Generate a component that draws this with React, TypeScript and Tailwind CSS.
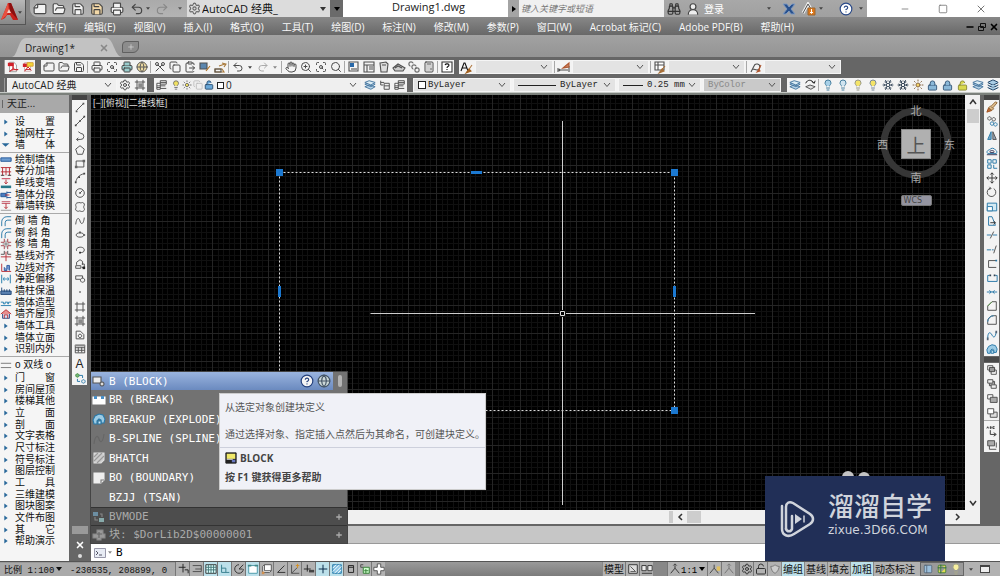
import React from 'react';
import {
  File, FolderOpen, Save, Printer, Undo2, Redo2, Settings, Hand, ScanSearch, ZoomIn, Search, Copy,
  ClipboardPaste, X, Binoculars, UserRound, CircleHelp, Lightbulb, Sun, Snowflake, Layers,
  Lock, LockOpen, Calculator, Scissors, Table2, PanelLeft, SquareStack, Minus, Square, Globe, Plus,
} from 'lucide-react';

type Shape = [d: string, stroke: string, fill?: string];
const K = '#505050';
const B = '#2878a8';
const R = '#b83038';

const glyphs: Record<string, Shape[]> = {
  line: [['M3 11L11 3', K], ['M2 11h2v2h-2zM10 2h2v2h-2z', 'none', '#555']],
  xline: [['M2 12L12 2', K], ['M1 11h2v2h-2zM6 6h2v2h-2zM11 1h2v2h-2z', 'none', '#444']],
  pline: [['M3 11h5a3.5 3.5 0 0 0 0-7M5 9L3 11l2 2M8 4L5 2', K]],
  polygon: [['M7 2L12 6 10 12H4L2 6z', K]],
  rect: [['M2.500 3.500h9v7h-9z', K], ['M1 9h3v3h-3zM10 2h3v3h-3z', 'none', '#666']],
  arc: [['M2 12C3 7 6 3 12 2', K], ['M1 11h2v2h-2zM5 5h2v2h-2zM11 1h2v2h-2z', 'none', '#444']],
  circle: [['M7 2a5 5 0 1 0 .01 0M7 7L10 4', K], ['M6 6h2v2h-2z', 'none', K]],
  cloud: [['M5 2c1-1 3 1 4 0s4 1 3 3-1 2 0 4-2 4-4 3-2 0-3 0-4-1-3-3 0-3 0-4 0-3 3-3z', K]],
  spline: [['M2 11C3 2 6 3 7 7S11 12 12 3', K]],
  ellipse: [['M7 4.500c-6 0-6 5 0 5s6-5 0-5', K], ['M6 3h2v2h-2zM11 6h2v2h-2z', 'none', K]],
  earc: [['M3 8C1 3 12 2 12 7 12 10 9 10 7 10', K], ['M6 9h2v2h-2z', 'none', '#222']],
  insert: [['M3 8V5l4-3 3 2v4M2 9h6v3H2zM9 7h3v4H9', K], ['M10 10h3v3h-3z', 'none', '#222']],
  block: [['M2 8.500V4.500h8v3M2 8.500h5', K], ['M10 7a2.500 2.500 0 1 0 .01 0', K]],
  point: [['M6 6h2v2h-2z', 'none', '#666']],
  region: [['M3.500 1v12M10.500 1v12M1 3.500h12M1 10.500h12', K]],
  gradient: [['M3.500 1v12M10.500 1v12M1 3.500h12M1 10.500h12', K], ['M5 5h5v5H5z', 'none', '#888']],
  wipe: [['M2.500 11.500v-9h5l4 4v5zM7 6a2 2 0 1 0 .01 0', K]],
  table: [['M1.500 2.500h11v9h-11zM1.500 5.500h11M1.500 8.500h11M5 5v6M9 5v6', K], ['M1 2h12v2H1z', 'none', '#888']],
  addsel: [['M4 2a2 2 0 1 0 .01 0', '#3a8a3a', '#7cb87c'], ['M11 9a2 2 0 1 0 .01 0M6 4h4v3M4 8v3h3', B]],
  brush: [['M1 13l2-5 4 3z', '#a05020', '#c07038'], ['M3 8l2-2 4 3-2 2zM6 6l5-5 2 1-5 6', '#906838', '#e0c090']],
  copy2: [['M4 2a2 2 0 1 0 .01 0M9 3a2 2 0 1 0 .01 0', K], ['M7 8a2 2 0 1 0 .01 0M11 9a2 2 0 1 0 .01 0', B]],
  mirror: [['M6 2v9H2z', B, '#7aa8c4'], ['M8 2v9h4z', K, '#9ab']],
  offset: [['M2 11C0 9 2 7 4 7a4 4 0 0 1 7 0c2 1 2 3 1 4z', B], ['M5 10c-1-2 1-3 2-2 1-1 3 0 2 2zM1 12.500h12', '#335']],
  array: [['M2 2h4v4H2zM2 8h4v4H2zM8 2h4v4H8z', B], ['M9 8v4h4', B]],
  move: [['M7 1v12M1 7h12M5 3l2-2 2 2M5 11l2 2 2-2M3 5L1 7l2 2M11 5l2 2-2 2', '#333']],
  rotate: [['M5 2.500A5 5 0 1 0 9 3M4 1l2 2-3 1', K]],
  scale: [['M1.500 2.500h11v9h-11z', B, '#d4eaf4'], ['M1.500 6.500h6v5h-6z', B, '#fff']],
  stretch: [['M3 12V2h4l4 10z', B], ['M5 9h6M9 7l2 2-2 2', '#333']],
  trim: [['M1 7h5M8 7h5', B], ['M5 11L9 3', K]],
  extend: [['M1 8h5M7 8h2', B], ['M9 12l3-9', K]],
  brkpt: [['M12 3H3v8h9', K], ['M11 2h2v2h-2z', 'none', B]],
  brk: [['M4 4H2v7h11V4h-2', B], ['M4 3h2v2H4zM9 3h2v2H9z', 'none', '#345']],
  join: [['M1 7h12M4 5l2 2-2 2M10 5L8 7l2 2', B]],
  chamfer: [['M2 12V7l5-5h5v10z', K], ['M2 7l5-5', '#5a9a4a']],
  fillet: [['M2 12V9a7 7 0 0 1 7-7h3v10z', K], ['M2 9a7 7 0 0 1 7-7', B]],
  blend: [['M2 11C2 3 5 3 7 7S11 10 12 3', B], ['M1 10h2v3H1zM11 2h2v3h-2z', 'none', '#567']],
  explode: [['M1 8l2-4 4-2 4 1 2 4-1 4H9V8L7 7 5 9v3H2z', B, '#9ccbe4'], ['M6 9h3v3H6z', B, '#cfe8f4']],
  order1: [['M2 2h6v5H2zM6 7h6v5H6z', K, '#fff'], ['M4 4h6v5H4z', '#444', '#999']],
  order2: [['M4 4h6v5H4z', K, '#aaa'], ['M2 2h6v4H2zM6 8h6v4H6z', K, '#eee']],
  order3: [['M2 2h6v5H2z', K, '#fff'], ['M5 5h8v6H5z', K, '#aaa']],
  order4: [['M5 6h8v6H5z', K, '#ddd'], ['M2 2h7v6H2z', K, '#fff']],
  abc: [['M5 6v5h6M9 9l3 2-3 2M1 4l1-2 1 2M5 2v2h1V2zM10 2H8v2h2', '#333']],
  tofront: [['M2 2h8v6H2z', K, '#aaa'], ['M4 8v4h8M12 4v6', K]],
  pdf: [['M3 1.500h5l3 3v8H3z', '#999', '#fff'], ['M1 2h7v4H1z', 'none', '#d02028'], ['M3 12c4-2 4-4 4-6 0 3 2 5 6 4-4 0-7 0-10 2', '#c82028', '#e05058']],
  pdf2: [['M3 2h7v10H3z', '#caa', '#fff'], ['M1 3h6v4H1z', 'none', '#d02028'], ['M6 2h7v4H8L6 8z', '#d8a030', '#f4d838'], ['M3 12l4-5 4 4M4 10h6', '#c82028']],
  stack: [['M1 9l5-2 7 2-5 3zM1 6l5-2 7 2-5 3z', '#4878a0', '#b8d4e8'], ['M1 4l5-2 7 2-5 3z', '#4878a0', '#dcecf4']],
  stackk: [['M2 9l5-2 6 2-5 3z', K, '#ddd'], ['M2 5C4 0 9 1 11 4M9 3l3 2 1-3', '#111']],
  lstack: [['M5 2h7v4H5zM3 8h8M3 11h9M5 4h7', K], ['M1 5h4v7H1zM1 8h4M1 10h4', K, '#fff']],
  tree: [['M2 2v5h3M2 4h4M6 5h6v7H6zM6 8h6', K, '#eee']],
  bookA: [['M1 11L4 3h1l3 8M2 8h5', '#111'], ['M7 12L12 5', '#b07840'], ['M6 13l3-4 2 2z', '#a06020', '#a06020']],
  dim: [['M1 12V8M12 12V6M2 10h9M3 9l-1 1 1 1', K], ['M6 8l6-5 0 4z', '#b05830', '#c88060']],
  tbl: [['M2 2h9v8H2zM2 5h9M5 2v8', K, '#fff'], ['M7 12l5-6M6 13l3-4 2 2z', '#a87038', '#a87038']],
  lead: [['M2 12L5 6a3 3 0 1 1 3 4L4 9', K], ['M9 11l3-6M8 12l2-3 1 2z', '#b05830', '#b05830']],
  linkp: [['M2 2h9v9H2z', K, '#f4f4f4'], ['M3 3h4v4H3z', 'none', '#2868a8'], ['M4 9h6', K]],
  palette: [['M2 2h10v10H2zM2 5h10M5 5v7M7 7h4M7 9h4', K]],
  sheet: [['M3 3l6-1 2 2-1 8H4zM5 5h4', K, '#ddd']],
  markup: [['M1 8l5-4 7 4-2 3H3zM3 8l3-2 4 2', K, '#ccc']],
  q: [['M2 2h10v10H2z', '#333', '#fff'], ['M5 5c1-2 4-1 4 0 0 2-2 1-2 3M7 9v1', '#111']],
  match: [['M2 3h7v6H2z', K, '#5b86ae'], ['M8 11l4-5', '#b07020']],
  quick: [['M2 9h7l2 3H2zM6 6l6-2M9 3l4 1-2 3', '#a87838'], ['M2 9h6v3H2z', K]],
  wall: [['M1 4.500h12v4H1z', '#22589a', '#6c9cd0']],
  multi: [['M1 3h12M1 8h12M3 3v9M7 3v9M11 3v9', R], ['M1 12h4M9 12h4', '#333']],
  single: [['M2 2h10', '#c03048'], ['M7 3v5M5 6l2 2 2-2', R], ['M1 10h12v3H1z', 'none', '#287888']],
  seg: [['M1 5h6v4H1zM8 4h5M8 10h5M8 3v8', '#22589a', '#4a7cc0'], ['M6 7h5', R]],
  curtain: [['M2 2h10M2 4h10', '#c05060'], ['M7 4v6M5 8l2 2 2-2', R], ['M1 12h12', '#999']],
  corner: [['M2 13V8a6 6 0 0 1 6-6h5', B], ['M6 13V9a3 3 0 0 1 3-3h4', B]],
  cross: [['M5 1v4H1M9 1v4h4M5 13V9H1M9 13V9h4', '#a04048'], ['M7 3v8M3 7h8', '#777']],
  crossr: [['M5 1v4H1M9 1v4h4', K], ['M7 2v11M1 8h12', R]],
  edge: [['M2 2v9M2 11h11', R], ['M5 6v4h3V4h3v6', '#3058a0', '#789ad0']],
  gap: [['M2 2v10M12 2v10', '#2078a8'], ['M4 7h6M5 5L4 7l1 2M9 5l1 2-1 2', '#3088b8']],
  warm: [['M1 7h12v4H1z', '#224878', '#5a80b0'], ['M2 3v4M5 5v3M8 5v3M11 5v3', '#224878']],
  shape: [['M1 10h12M1 6h3v2h2V6h3v2h1V6h3', '#2880b0']],
  roof: [['M1 7l6-5 6 5', R, '#e89090'], ['M3 7v5h8V7', '#305088', '#dde'], ['M5 12V8h4v4', R]],
  double: [['M1 5h12M1 10h12', '#777']],
  expand: [['M5 4l4 3-4 3z', 'none', '#28689a']],
  open: [['M2 5h9L6.500 9z', 'none', '#28689a']],
  snap: [['M7 1v10M2 5h8M9 8h4v4', '#222']],
  ortho: [['M2 3h10v7H2M5 7h7', K]],
  grid: [['M1 2h12v10H1z', '#333', '#dff'], ['M4 2v10M7 2v10M10 2v10M1 5h12M1 8h12', '#477']],
  lsnap: [['M3 2v9h9', '#38808e'], ['M3 6h5v5', '#38808e']],
  polar: [['M7 2a5 5 0 1 0 5 5M7 7l5-5M7 7h4', '#333']],
  osnap: [['M2 3h10v9H2z', '#4898a8', '#fff'], ['M1 2h4v2H1zM9 2h4v2H9z', 'none', '#488']],
  osnap3: [['M4 2h8v7l-2 2H2V4zM4 9V2M4 9h8', '#555', '#fff'], ['M1 10h3v3H1z', 'none', '#d09050']],
  angle: [['M11 3L3 11h9', '#333']],
  ducs: [['M3 2v10h9M3 12l7-7', K], ['M10 1v5M8 3h4', '#d89020']],
  dyn: [['M5 2v8M1 7h8', '#222'], ['M7 8h6v3H7z', 'none', '#444']],
  plusb: [['M7 2v10M2 7h10', '#024']],
  transp: [['M2 2h10v10H2z', '#2478a8', '#88c4e4'], ['M2 6l4-4M2 10l8-8M4 12l8-8M8 12l4-4', '#fff']],
  small: [['M4 3h6v8H4zM4 5h6', '#222']],
  cycle: [['M2 5V2h3M2 5h3', K], ['M5 5h7v7H5z', '#388038', '#cfc'], ['M8 7v5M6 9h5', '#388038']],
  big: [['M5 1h4v4h4v4H9v4H5V9H1V5h4z', '#555', '#fff']],
  model: [['M2 2h10v10H2z', '#333', '#ddd'], ['M4 4l6 6M4 10h6', '#555']],
  lay: [['M1 3h5v6H1zM8 3h5v6H8z', '#333', '#eee'], ['M1 12h12', '#333']],
  anno: [['M7 2v4M7 6L2 12M7 6l5 6M5 3l2-2 2 2', '#333', '#ddd']],
  annoY: [['M6 2v4M6 6L1 12M6 6l5 6', '#444', '#ddd'], ['M9 4h4v5H9z', 'none', '#e0c060']],
  shield: [['M2 4c3 0 4-1 5-2 1 1 3 2 5 2-1 5-3 7-5 8C4 11 3 8 2 4', '#777', '#ccc']],
  blk: [['M1 3h8v6H1z', '#555', '#eee'], ['M10 8a2 2 0 1 0 .01 0', '#555', '#ddd']],
  brkw: [['M1 4h12v7H1z', '#fff', '#fff'], ['M2 3h3v3H2zM9 3h3v3H9z', 'none', '#4a90c8']],
  hatchw: [['M2 2h10v7l-3 3H2z', '#ddd', '#ccc'], ['M2 6l4-4M2 10l8-8M5 12l7-7', '#999']],
  bow: [['M2 2h10v7l-3 3H2z', '#eee', '#eee'], ['M9 12V9h3', '#777']],
  splw: [['M2 12C3 3 6 3 7 7S11 11 12 2', '#666']],
  sysvar: [['M1 2h5v4H1z', 'none', '#6c8ea2'], ['M7 8h5v4H7z', 'none', '#8aa'], ['M3 7v3h3M8 4h2v3', '#888']],
  gearg: [['M5 2h6v4h2v4H9v2H5v-2H1V6h4z', '#888', '#999'], ['M5 6h5M7 4v6', '#666']],
  blockcol: [['M1 1h12v12H1z', '#222', '#222'], ['M2 2h10v6H2z', 'none', '#f0e868'], ['M8 9h4v3H8z', 'none', '#6878c0'], ['M2 8h7v1H2z', 'none', '#eee']],
};

function Glyph({ n, className = 'size-3.5' }: { n: string; className?: string }) {
  return (
    <svg viewBox="0 0 14 14" className={`${className} shrink-0`} aria-hidden="true">
      {glyphs[n].map(([d, s, f], i) => (
        <path key={i} d={d} stroke={s} fill={f ?? 'none'} strokeWidth={1.1} />
      ))}
    </svg>
  );
}

function Tool({ children, label, className = 'w-[15px]' }: { children: React.ReactNode; label: string; className?: string }) {
  return (
    <button type="button" aria-label={label} className={`flex h-full shrink-0 items-center justify-center ${className}`}>
      {children}
    </button>
  );
}

const Sep = () => <span className="mx-px h-3 w-px shrink-0 bg-[#a8a8a8]" />;
const Down = ({ className = 'text-[#333]' }: { className?: string }) => (
  <svg viewBox="0 0 6 4" className={`h-1 w-1.5 shrink-0 ${className}`}><path d="M0 0h6L3 4z" fill="currentColor" /></svg>
);
const SmallDown = ({ className = 'text-[#444]' }: { className?: string }) => (
  <svg viewBox="0 0 6 4" className={`h-[3px] w-1 shrink-0 ${className}`}><path d="M0 0h6L3 4z" fill="currentColor" /></svg>
);
const Chevron = () => (
  <svg viewBox="0 0 9 6" className="pointer-events-none mr-1 h-1.5 w-[9px] shrink-0"><path d="M2 1l3 3.500L8 1" fill="none" stroke="#555" /></svg>
);

function Combo({ label, value = '', width, lead, text = '', tone = 'bg-[#e3e3e3]' }: {
  label: string; value?: string; width: string; lead?: React.ReactNode; text?: string; tone?: string;
}) {
  return (
    <label className={`flex h-full shrink-0 items-center overflow-hidden border border-[#f5f5f5] ${tone} ${width}`}>
      {lead}
      <select aria-label={label} defaultValue={value} className={`h-full min-w-0 flex-1 appearance-none bg-transparent outline-none ${text}`}>
        <option>{value}</option>
      </select>
      <Chevron />
    </label>
  );
}

const strip = 'flex h-[14px] shrink-0 items-center bg-[#f3f3f3]';
const mono = "font-['Liberation_Mono','Noto_Sans_CJK_SC',monospace]";
const compact = "font-['Liberation_Sans','Noto_Sans_CJK_SC',sans-serif]";
const ic = 'size-3 shrink-0 text-[#4a4a4a]';

function Header() {
  const menus = ['文件(F)', '编辑(E)', '视图(V)', '插入(I)', '格式(O)', '工具(T)', '绘图(D)', '标注(N)', '修改(M)', '参数(P)', '窗口(W)', 'Acrobat 标记(C)', 'Adobe PDF(B)', '帮助(H)'];
  const qa = 'size-[14px] text-[#4a4a4a] fill-[#f2f2f2]';
  return (
    <header className="flex h-[35px] shrink-0 bg-gradient-to-b from-[#878787] from-50% to-[#686868]">
      <button type="button" aria-label="应用程序菜单" className="flex h-[25px] w-[26px] shrink-0 items-center border-r border-b border-[#555] bg-gradient-to-b from-[#b8b8b8] to-[#888]">
        <svg viewBox="0 0 18 20" className="h-5 w-[18px]">
          <path d="M1 18L8 1h3l7 17h-5l-3-5H7l-2 3z" fill="#c8201c" />
          <path d="M8 1l1 8-3 5-5 4z" fill="#e85040" />
          <path d="M9 1h2l7 17-8-9z" fill="#8c1010" />
          <path d="M9 7l2 4H7z" fill="#f4d0c8" />
        </svg>
        <SmallDown />
      </button>
      <div className="flex min-w-0 flex-1 flex-col">
        <div className="flex h-[17px] shrink-0">
          <div className="ml-1 flex w-[157px] shrink-0 items-center rounded-bl-lg bg-gradient-to-b from-[#aaa] to-[#b4b4b4]">
            <Tool label="新建" className="w-[19px]"><File className={`${qa} -rotate-90`} /></Tool>
            <Tool label="打开" className="w-[19px]"><FolderOpen className={qa} /></Tool>
            <Tool label="保存" className="w-[19px]"><Save className={qa} /></Tool>
            <Tool label="另存为" className="w-5"><Save className="size-[14px] fill-[#f4d9a8] text-[#444]" /></Tool>
            <Tool label="打印" className="w-5"><Printer className={qa} /></Tool>
            <Tool label="放弃" className="w-[19px]"><Undo2 className="size-[14px] text-[#444]" /></Tool>
            <SmallDown className="mr-0.5 text-[#444]" />
            <Tool label="重做" className="w-5"><Redo2 className="size-[14px] text-[#888]" /></Tool>
            <SmallDown className="ml-1.5 text-[#555]" />
          </div>
          <label className="flex w-[143px] shrink-0 items-center bg-[#dcdcdc] pr-1">
            <Settings className="mx-px size-[13px] shrink-0 text-[#666]" />
            <select aria-label="工作空间" className="h-full min-w-0 flex-1 appearance-none bg-transparent text-[11px] leading-4 text-[#111] outline-none"><option>AutoCAD 经典_</option></select>
            <Down />
          </label>
          <button type="button" aria-label="自定义快速访问工具栏" className="flex w-[13px] shrink-0 items-center justify-center bg-[#6a6a6a]"><Down className="text-black" /></button>
          <h1 className="flex min-w-0 flex-1 items-center justify-center bg-white pr-1 pb-1 pl-2.5 text-[11px] leading-none text-[#222]">Drawing1.dwg</h1>
          <button type="button" aria-label="展开搜索" className="flex w-[11px] shrink-0 items-center justify-center bg-[#a4a4a4]"><Down className="-rotate-90 text-black" /></button>
          <input aria-label="搜索" placeholder="键入关键字或短语" className="w-[145px] shrink-0 bg-[#f0f0f0] px-0.5 text-[9px] italic outline-none placeholder:text-[#777]" />
          <div className="flex w-[203px] shrink-0 items-center bg-gradient-to-b from-[#a8a8a8] to-[#a0a0a0]">
            <Tool label="查找" className="w-[19px]"><Binoculars className="size-[14px] text-[#333]" /></Tool>
            <Tool label="用户" className="w-[19px]"><UserRound className="size-[14px] fill-[#eee] text-[#444]" /></Tool>
            <button type="button" className="ml-0.5 text-[10px] leading-none text-white">登录</button>
            <span className="flex-1" />
            <SmallDown />
            <Tool label="交换" className="ml-1.5 w-6">
              <svg viewBox="0 0 14 12" className="h-3 w-3.5"><path d="M1 1h4l2 3 3-3h3L9 6l4 5H9L7 8l-3 3H1l4-5z" fill="#28508c" stroke="#7c98c0" /></svg>
            </Tool>
            <Tool label="更新" className="w-4">
              <svg viewBox="0 0 16 14" className="h-3.5 w-4"><path d="M2 11L7 2l3 5" fill="none" stroke="#eee" strokeWidth="3" /><path d="M2 11L7 2l3 5" fill="none" stroke="#555" /><path d="M7 6h7v7H7z" fill="#e07818" stroke="#963" /><path d="M10.500 7v4M9 10l1.500 1.500L12 10" stroke="#fff" fill="none" /></svg>
            </Tool>
            <SmallDown className="ml-0.5 text-[#444]" />
            <Tool label="帮助" className="ml-3.5 w-[18px]"><CircleHelp className="size-[14px] fill-white text-[#284888]" /></Tool>
            <SmallDown className="mx-1 text-[#444]" />
          </div>
          <div className="flex w-[133px] shrink-0 items-start bg-white pl-[19px] text-[#777]">
            <Tool label="最小化" className="h-2.5 w-[38px]"><Minus className="size-2.5" /></Tool>
            <Tool label="最大化" className="h-2.5 w-[38px]"><Square className="size-2.5" /></Tool>
            <Tool label="关闭" className="h-2.5 w-[38px]"><X className="size-3" /></Tool>
          </div>
        </div>
        <nav className="flex flex-1 items-center gap-[18px] pt-0.5 pl-[9px] text-[10px] leading-none whitespace-nowrap text-[#f8f8f8]">
          {menus.map((m) => <button type="button" key={m}>{m}</button>)}
          <span className="ml-auto flex items-center text-black">
            <Tool label="最小化图形" className="w-3"><Minus className="size-2.5" strokeWidth={4} /></Tool>
            <Tool label="还原图形" className="w-3">
              <svg viewBox="0 0 10 10" className="size-2.5"><path d="M3.500 1.500h5v4h-5zM1.500 4.500h5v4h-5z" fill="#777" stroke="#111" /></svg>
            </Tool>
            <Tool label="关闭图形" className="w-3"><X className="size-2.5" strokeWidth={4} /></Tool>
          </span>
        </nav>
      </div>
    </header>
  );
}

function FileTabs() {
  return (
    <div className="flex h-[22px] shrink-0 items-end bg-gradient-to-b from-[#a2a2a2] to-[#949494] pl-3">
      <div className="relative flex h-[19px] w-[110px] items-center pl-[13px] text-[10px] leading-none text-[#222]">
        <svg viewBox="0 0 110 19" preserveAspectRatio="none" className="absolute inset-0 h-full w-full"><path d="M0 19C6 18 6 0 14 0H94C102 0 102 18 110 19z" fill="#c2c2c2" /></svg>
        <span className="relative flex-1">Drawing1*</span>
        <button type="button" aria-label="关闭选项卡" className="relative mr-[13px]"><X strokeWidth={4} className="size-2.5 text-[#888]" /></button>
      </div>
      <button type="button" aria-label="新建选项卡" className="mb-1 flex h-3 w-[17px] items-center justify-center rounded-tl rounded-br-md border border-[#606060] bg-[#8c8c8c]"><Plus className="size-2 text-[#ddd]" /></button>
    </div>
  );
}

function Toolbars() {
  const byl = `text-[9px] text-[#222] ${mono}`;
  return (
    <div className="flex h-[35px] shrink-0 flex-col gap-1 overflow-hidden bg-[#666] pt-[3px]">
      <div className="flex">
        <span className="ml-1 h-[14px] w-px bg-[#999]" />
        <div className={strip}><Tool label="PDF"><Glyph n="pdf" className="size-3" /></Tool><Tool label="PDF 注释"><Glyph n="pdf2" className="size-3" /></Tool></div>
        <span className="w-1.5 shrink-0" />
        <div className={strip}>
          <Tool label="新建"><File className={`${ic} -rotate-90`} /></Tool>
          <Tool label="打开"><FolderOpen className={ic} /></Tool>
          <Tool label="保存"><Save className={ic} /></Tool>
          <Sep />
          <Tool label="打印"><Printer className={ic} /></Tool>
          <Tool label="打印预览"><ScanSearch className={ic} /></Tool>
          <Tool label="发布"><Printer className="size-3 fill-[#9cc] text-[#444]" /></Tool>
          <Tool label="三维打印"><Globe className="size-3 fill-[#ecd9a0] text-[#5a5a5a]" /></Tool>
          <Sep />
          <Tool label="剪切"><Scissors className={`${ic} rotate-90`} /></Tool>
          <Tool label="复制"><Copy className={ic} /></Tool>
          <Tool label="粘贴"><ClipboardPaste className={ic} /></Tool>
          <Tool label="特性匹配"><Glyph n="match" /></Tool>
          <Tool label="块编辑器"><Glyph n="quick" /></Tool>
          <Sep />
          <Tool label="放弃"><Undo2 className={ic} /></Tool>
          <span className="flex w-2.5 items-center justify-center"><SmallDown /></span>
          <Tool label="重做"><Redo2 className="size-3 text-[#aaa]" /></Tool>
          <span className="flex w-2.5 items-center justify-center"><SmallDown className="text-[#888]" /></span>
          <Sep />
          <Tool label="平移"><Hand className={ic} /></Tool>
          <Tool label="实时缩放"><ZoomIn className={ic} /></Tool>
          <Tool label="窗口缩放"><ScanSearch className={ic} /></Tool>
          <Tool label="缩放上一个"><Search className={ic} /></Tool>
          <Sep />
          <Tool label="特性"><Glyph n="linkp" /></Tool>
          <Tool label="设计中心"><Glyph n="palette" /></Tool>
          <Tool label="工具选项板"><Glyph n="sheet" /></Tool>
          <Tool label="图纸集"><Glyph n="markup" /></Tool>
          <Tool label="标记集"><SquareStack className={ic} /></Tool>
          <Tool label="计算器"><Calculator className={ic} /></Tool>
          <Sep />
          <Tool label="帮助"><Glyph n="q" /></Tool>
        </div>
        <span className="w-[5px] shrink-0" />
        <div className={strip}>
          <Tool label="文字样式" className="w-4"><Glyph n="bookA" /></Tool><Combo label="文字样式控制" width="w-[78px]" />
          <Sep /><Tool label="标注样式" className="w-4"><Glyph n="dim" /></Tool><Combo label="标注样式控制" width="w-[77px]" />
          <Sep /><Tool label="表格样式" className="w-4"><Glyph n="tbl" /></Tool><Combo label="表格样式控制" width="w-[77px]" />
          <Sep /><Tool label="引线样式" className="w-4"><Glyph n="lead" /></Tool><Combo label="引线样式控制" width="w-[77px]" />
        </div>
      </div>
      <div className="flex">
        <span className="ml-1 h-[14px] w-[3px] shrink-0 border-l border-[#999]" />
        <div className={strip}>
          <Combo label="工作空间" value="AutoCAD 经典" width="w-[110px]" text="pl-1 text-[10px] leading-none text-[#222]" tone="bg-[#efefef]" />
          <Tool label="工作空间设置"><Settings className={ic} /></Tool>
          <Tool label="我的工作空间"><Glyph n="gradient" className="size-3" /></Tool>
        </div>
        <span className="w-[7px] shrink-0" />
        <div className={strip}>
          <Tool label="图层特性"><Glyph n="lstack" className="size-3" /></Tool>
          <Combo label="图层" value="0" width="w-[193px]" text="text-[10px] leading-none text-[#222]" tone="bg-[#efefef]" lead={
            <span className="flex shrink-0 items-center gap-px pl-px">
              <Lightbulb className="size-2.5 fill-[#f0e060] text-[#666]" />
              <Sun className="size-2.5 fill-[#f0e060] text-[#666]" />
              <Copy className="size-2.5 text-[#bbb]" />
              <LockOpen className="size-2.5 fill-[#6aa8d8] text-[#246]" />
              <span className="mx-0.5 size-[7px] border border-[#222] bg-white" />
            </span>} />
          <Tool label="置为当前"><Glyph n="stack" className="size-3" /></Tool>
          <Tool label="上一图层"><Glyph n="tree" className="size-3" /></Tool>
          <Tool label="图层状态"><Glyph n="lstack" className="size-3" /></Tool>
        </div>
        <span className="w-1.5 shrink-0" />
        <div className={`${strip} gap-0.5`}>
          <Combo label="颜色" value="ByLayer" width="w-[98px]" text={byl} lead={<span className="mr-0.5 ml-1 size-2 shrink-0 border border-[#222] bg-white" />} />
          <Combo label="线型" value="ByLayer" width="w-[103px]" text={byl} lead={<span className="mr-1 ml-1 h-px w-[38px] shrink-0 bg-[#222]" />} />
          <Combo label="线宽" value="0.25 mm" width="w-[83px]" text={byl} lead={<span className="mr-1 ml-1 h-px w-5 shrink-0 bg-[#222]" />} />
          <Combo label="打印样式" value="ByColor" width="w-[78px]" text={`pl-1 text-[9px] text-[#888] ${mono}`} tone="bg-[#c9c9c9]" />
        </div>
        <span className="w-1.5 shrink-0" />
        <div className={strip}>
          <Tool label="图层匹配"><Glyph n="stack" className="size-3" /></Tool>
          <Tool label="图层上一个"><Glyph n="stackk" className="size-3" /></Tool>
          <Sep />
          <Tool label="隔离"><Lightbulb className="size-3 fill-[#a8d0e8] text-[#4880a0]" /></Tool>
          <Tool label="取消隔离"><Lightbulb className="size-3 fill-[#d0e4f0] text-[#4880a0]" /></Tool>
          <Tool label="打开图层"><Lightbulb className="size-3 fill-[#f4e468] text-[#998]" /></Tool>
          <Tool label="关闭图层"><Lightbulb className="size-3 fill-[#f4e468] text-[#789]" /></Tool>
          <Tool label="冻结"><Snowflake className="size-3 text-[#456]" /></Tool>
          <Tool label="冻结所有"><Snowflake className="size-3 text-[#345]" /></Tool>
          <Tool label="解冻"><Sun className="size-3 fill-[#f4d468] text-[#864]" /></Tool>
          <Tool label="锁定"><Lock className="size-[11px] fill-[#8ab8d8] text-[#357]" /></Tool>
          <Tool label="锁定所有"><Lock className="size-[11px] fill-[#8ab8d8] text-[#357]" /></Tool>
          <Tool label="解锁"><LockOpen className="size-[11px] fill-[#d8d850] text-[#883]" /></Tool>
          <Tool label="更改图层"><Glyph n="stack" className="size-3" /></Tool>
          <Tool label="合并图层"><Layers className="size-3 fill-[#a8cce4] text-[#246]" /></Tool>
        </div>
      </div>
    </div>
  );
}

const groups: { h: string; rows: [string, string][] }[] = [
  { h: 'h-[35px]', rows: [['expand', '设　　置'], ['expand', '轴网柱子'], ['open', '墙　　体']] },
  { h: 'h-[58px]', rows: [['wall', '绘制墙体'], ['multi', '等分加墙'], ['single', '单线变墙'], ['seg', '墙体分段'], ['curtain', '幕墙转换']] },
  { h: 'h-[140px]', rows: [['corner', '倒 墙 角'], ['corner', '倒 斜 角'], ['cross', '修 墙 角'], ['crossr', '基线对齐'], ['edge', '边线对齐'], ['gap', '净距偏移'], ['warm', '墙柱保温'], ['shape', '墙体造型'], ['roof', '墙齐屋顶'], ['expand', '墙体工具'], ['expand', '墙体立面'], ['expand', '识别内外']] },
  { h: 'h-[14px]', rows: [['double', 'o 双线 o']] },
  { h: 'h-[175px]', rows: ['门　　窗', '房间屋顶', '楼梯其他', '立　　面', '剖　　面', '文字表格', '尺寸标注', '符号标注', '图层控制', '工　　具', '三维建模', '图块图案', '文件布图', '其　　它', '帮助演示'].map((t): [string, string] => ['expand', t]) },
];

function SidePanel() {
  return (
    <aside className={`flex w-[69px] shrink-0 flex-col bg-[#f5f5f5] ${compact}`}>
      <h2 className="flex h-[18px] shrink-0 items-center bg-[#a9a9a9] text-[10px] leading-none text-[#222]"><span className="mr-1 ml-0.5 h-2 w-px bg-[#666]" />天正...</h2>
      <div className="flex flex-col pt-[3px]">
        {groups.map((g, i) => (
          <React.Fragment key={i}>
            {i > 0 && i < 4 && <hr className="my-px border-[#aaa]" />}
            <ul className={`flex flex-col ${g.h}`}>
              {g.rows.map(([n, t]) => (
                <li key={t} className="flex min-h-0 flex-1">
                  <button type="button" className="flex items-center text-[10px] leading-none whitespace-pre text-[#111]">
                    <Glyph n={n} className="mr-[3px] size-3" />{t}
                  </button>
                </li>
              ))}
            </ul>
          </React.Fragment>
        ))}
      </div>
    </aside>
  );
}

function VBar({ names, height }: { names: string[]; height: string }) {
  return (
    <div className={`flex w-[15px] flex-col bg-[#f3f3f3] ${height}`}>
      {names.map((n) => (
        <button type="button" key={n} aria-label={n} className="flex min-h-0 flex-1 items-center justify-center">
          {n === 'A' ? <span className="font-['Liberation_Sans',sans-serif] text-[12px] leading-none text-[#222]">A</span> : <Glyph n={n} className="size-3" />}
        </button>
      ))}
    </div>
  );
}

const drawTools = ['line', 'xline', 'pline', 'polygon', 'rect', 'arc', 'circle', 'cloud', 'spline', 'ellipse', 'earc', 'insert', 'block', 'point', 'region', 'gradient', 'wipe', 'table', 'A', 'addsel'];
const editTools = ['brush', 'copy2', 'mirror', 'offset', 'array', 'move', 'rotate', 'scale', 'stretch', 'trim', 'extend', 'brkpt', 'brk', 'join', 'chamfer', 'fillet', 'blend', 'explode'];

function Canvas() {
  return (
    <div className="relative min-w-0 flex-1 overflow-hidden bg-black">
      <svg className="absolute inset-0 h-full w-full" aria-label="绘图区">
        <defs>
          <pattern id="grid" width="28" height="28" x="9" y="14" patternUnits="userSpaceOnUse">
            <path d="M6.500 0v28M11.500 0v28M17.500 0v28M22.500 0v28M0 6.500h28M0 11.500h28M0 17.500h28M0 22.500h28" stroke="#101010" />
            <path d="M.5 0v28M0 .5h28" stroke="#252525" />
          </pattern>
        </defs>
        <rect width="100%" height="100%" fill="url(#grid)" />
        <rect x="188.500" y="77.500" width="395" height="238" fill="none" stroke="#ddd" strokeDasharray="2 2" />
        <path d="M279.500 218.500H468M475 218.500H664M471.500 26V215M471.500 222V410" stroke="#ccc" />
        <path d="M469.500 216.500h4v4h-4z" fill="none" stroke="#ddd" />
        <path d="M185 74h7v7h-7zM580 74h7v7h-7zM580 312h7v7h-7zM380 76h11v3h-11zM187 191h3v11h-3zM582 191h3v11h-3z" fill="#1b78d0" />
        <circle cx="757" cy="382" r="6" fill="#c4c4c4" />
        <circle cx="773" cy="383" r="6" fill="#c4c4c4" />
      </svg>
      <div className={`absolute top-1 left-0.5 flex text-[9px] leading-none text-[#ddd] ${compact}`}>
        <button type="button">[−]</button><button type="button">[俯视]</button><button type="button">[二维线框]</button>
      </div>
      <div className="absolute top-2.5 right-[9px] flex w-20 flex-col items-center font-['Noto_Sans_CJK_SC',sans-serif] text-[11px] leading-none text-[#aaa]">
        <div className="relative flex h-[78px] w-20 flex-col items-center justify-between px-px">
          <svg viewBox="0 0 80 78" className="absolute inset-0"><circle cx="40" cy="38" r="32" fill="none" stroke="#363636" strokeWidth="7" /></svg>
          <button type="button" className="relative">北</button>
          <div className="relative flex w-full items-center justify-between">
            <button type="button">西</button>
            <button type="button" className="flex size-[30px] items-center justify-center border border-[#888] bg-[#b0b0b0] text-[19px] leading-none text-[#555]">上</button>
            <button type="button">东</button>
          </div>
          <button type="button" className="relative">南</button>
        </div>
        <button type="button" className="mt-3 h-[11px] w-[31px] rounded-xs border border-[#777] bg-[#9494a0] pl-0.5 text-left font-['DejaVu_Sans',sans-serif] text-[8px] leading-none text-[#444]">WCS</button>
      </div>
    </div>
  );
}

function Suggestions() {
  const rows: [string, string][] = [['brkw', 'BR (BREAK)'], ['explode', 'BREAKUP (EXPLODE)'], ['splw', 'B-SPLINE (SPLINE)'], ['hatchw', 'BHATCH'], ['bow', 'BO (BOUNDARY)'], ['', 'BZJJ (TSAN)']];
  const row = 'flex w-full items-center gap-[3px] pl-px text-left';
  return (
    <div className="absolute bottom-[17px] left-[21px] flex h-[173px] w-[258px] flex-col border border-[#444] bg-[#727272] font-['DejaVu_Sans_Mono','Noto_Sans_CJK_SC',monospace] text-[11px] leading-none text-white">
      <div className="flex h-[18px] shrink-0">
        <div className="flex flex-1 items-center gap-[3px] bg-gradient-to-b from-[#9ab4de] to-[#6b8abf] pr-0.5 pl-px">
          <Glyph n="blk" /><span className="flex-1">B (BLOCK)</span>
          <button type="button" aria-label="帮助"><CircleHelp className="size-3.5 fill-[#f4f4f4] text-[#24407c]" /></button>
          <button type="button" aria-label="在线搜索"><Globe className="size-3.5 fill-[#ccd8d8] text-[#456]" /></button>
        </div>
        <span className="mx-[5px] my-[3px] w-1 rounded-sm bg-[#b4b4b4]" />
      </div>
      <div className="flex min-h-0 flex-1 flex-col">
        {rows.map(([n, t]) => (
          <button type="button" key={t} className={`${row} min-h-0 flex-1`}>{n ? <Glyph n={n} /> : <span className="w-3.5" />}{t}</button>
        ))}
      </div>
      {[['sysvar', 'BVMODE'], ['gearg', '块: $DorLib2D$00000001']].map(([n, t]) => (
        <button type="button" key={t} className={`${row} h-[18px] shrink-0 border-t border-[#333] bg-[#4d4d4d] pr-1 text-[#aaa]`}>
          <Glyph n={n} /><span className="flex-1">{t}</span><Plus className="size-2" strokeWidth={4} />
        </button>
      ))}
      <div role="tooltip" className="absolute top-[21px] left-32 flex h-[97px] w-[267px] flex-col border border-[#ccc] bg-[#f0f1f7] font-['Open_Sans','Noto_Sans_CJK_SC',sans-serif] text-[10px] leading-none whitespace-nowrap text-[#555]">
        <p className="mt-2 pl-[5px]">从选定对象创建块定义</p>
        <p className="mt-[17px] pl-[5px]">通过选择对象、指定插入点然后为其命名，可创建块定义。</p>
        <hr className="mt-2 border-[#cdd0dc]" />
        <p className="mt-1 flex items-center gap-[3px] pl-[5px] font-bold text-[#444]"><Glyph n="blockcol" className="size-3" />BLOCK</p>
        <p className="mt-2 pl-[5px] font-bold text-[#444]">按 F1 键获得更多帮助</p>
      </div>
    </div>
  );
}

function Watermark() {
  return (
    <div className="absolute right-[55px] bottom-0 flex h-[85px] w-[180px] items-center gap-[13px] bg-[#212f57] pl-[14px] text-[#d0d4dc]">
      <svg viewBox="0 0 36 38" className="h-[38px] w-9 shrink-0" fill="none" stroke="currentColor" strokeWidth="2.500" strokeLinecap="round">
        <path d="M7 29V7c0-4 3-6 7-4l17 11c4 3 4 7 0 10L15 34c-6 4-12 1-12-5V6" />
        <path d="M7 29c1 3 5 3 6 0V16" />
        <path d="M16 14l7 5-7 5z" fill="currentColor" stroke="none" />
        <path d="M25 16v6" strokeWidth="1.500" />
      </svg>
      <div className="flex flex-col gap-1 pb-2 leading-none whitespace-nowrap">
        <span className="font-['Liberation_Sans','Noto_Sans_CJK_SC',sans-serif] text-[26px] leading-none font-medium">溜溜自学</span>
        <span className="font-['DejaVu_Sans',sans-serif] text-[12px] leading-none">zixue.3D66.COM</span>
      </div>
    </div>
  );
}

function StatusBar() {
  const cell = 'h-full w-[14px] border-l border-[#777]';
  const left: [string, boolean][] = [['snap', false], ['ortho', false], ['grid', true], ['lsnap', true], ['polar', false], ['osnap', true], ['osnap3', false], ['angle', false], ['ducs', false], ['dyn', false], ['plusb', true], ['transp', true], ['small', false], ['cycle', false], ['big', false]];
  const txt = 'h-full shrink-0 border-l border-[#888] px-px pt-px text-[10px] leading-none text-[#111]';
  return (
    <footer className={`flex h-[15px] shrink-0 items-center overflow-hidden border-t border-[#555] bg-gradient-to-b from-[#9a9a9a] to-[#7c7c7c] whitespace-nowrap ${compact}`}>
      <button type="button" className={`flex w-[66px] shrink-0 items-center bg-[#aaa] pt-1 pl-1 text-[9px] leading-none text-[#111] ${mono}`}>比例 1:100<Down className="mb-1 ml-0.5" /></button>
      <output className={`w-[109px] shrink-0 bg-[#aaa] pt-1 pl-1 text-[9px] leading-none text-[#111] ${mono}`}>-230535, 208899, 0</output>
      <div className="flex h-full shrink-0 bg-[#b2b2b2]">
        {left.map(([n, on]) => <Tool key={n} label={n} className={on ? `${cell} bg-[#bce0ea]` : cell}><Glyph n={n} className="size-3" /></Tool>)}
      </div>
      <div className="ml-auto flex h-full shrink-0 items-center bg-[#b2b2b2]">
        <button type="button" className={txt}>模型</button>
        <Tool label="布局" className={cell}><Glyph n="model" className="size-3" /></Tool>
        <Tool label="快速查看" className={cell}><Glyph n="lay" className="size-3" /></Tool>
        <span className="h-full w-3.5 bg-[#888]" />
        <Tool label="注释比例" className={cell}><Glyph n="anno" className="size-3" /></Tool>
        <button type="button" className={`flex w-[26px] items-center pt-1 text-[9px] leading-none ${mono}`}>1:1<Down className="mb-1 ml-0.5" /></button>
        <Tool label="注释可见性" className={cell}><Glyph n="annoY" className="size-3" /></Tool>
        <Tool label="自动缩放" className={cell}><Glyph n="anno" className="size-3 opacity-50" /></Tool>
        <span className="h-full w-1 bg-[#888]" />
        <Tool label="切换工作空间" className={cell}><Settings className="size-3 text-[#333]" /></Tool>
        <Tool label="锁定" className={cell}><LockOpen className="size-3 text-[#333]" /></Tool>
        <Tool label="硬件加速" className={cell}><Glyph n="shield" className="size-3" /></Tool>
        <button type="button" className={`${txt} bg-[#bce0ea]`}>编组</button>
        <button type="button" className={txt}>基线</button>
        <button type="button" className={txt}>填充</button>
        <button type="button" className={`${txt} bg-[#bce0ea]`}>加粗</button>
        <button type="button" className={txt}>动态标注</button>
        <div className="ml-1 flex h-full items-center border border-[#666] bg-[#9a9a9a]">
          <Tool label="对象隔离" className="w-3.5"><PanelLeft className="size-2.5 fill-[#9cc0dc] text-[#567]" /></Tool>
          <Tool label="图层管理" className="w-3.5"><Table2 className="size-2.5 fill-[#e0e050] text-[#387838]" /></Tool>
          <Tool label="提示" className="w-3.5"><Lightbulb className="size-3 fill-[#f8f0a0] text-[#aa8]" /></Tool>
        </div>
        <span className="flex w-3.5 justify-center"><SmallDown /></span>
        <Tool label="全屏显示" className="w-3.5"><span className="h-2 w-2.5 border border-t-2 border-[#444] bg-[#eee]" /></Tool>
        <span className="w-2" />
      </div>
    </footer>
  );
}

export default function App() {
  return (
    <div className="flex h-screen flex-col overflow-hidden bg-[#666] font-['Open_Sans','Noto_Sans_CJK_SC',sans-serif] text-black">
      <Header />
      <FileTabs />
      <Toolbars />
      <div className="h-[3px] shrink-0 border-t border-[#c4c8c4] bg-[#7b807b]" />
      <main className="flex min-h-0 flex-1">
        <SidePanel />
        <div className="relative flex min-w-0 flex-1 flex-col">
          <div className="flex min-h-0 flex-1">
            <div className="w-[22px] shrink-0 pl-[3px]">
              <div className="h-[5px] w-[15px] bg-[#444]" />
              <VBar names={drawTools} height="h-[285px]" />
            </div>
            <div className="flex min-w-0 flex-1 flex-col">
              <div className="flex min-h-0 flex-1">
                <Canvas />
                <div className="flex w-[15px] shrink-0 flex-col items-center bg-[#f0f0f0]">
                  <button type="button" aria-label="向上滚动" className="flex h-[14px] items-center"><svg viewBox="0 0 8 6" className="h-1.5 w-2"><path d="M1 5l3-4 3 4" fill="none" stroke="#333" strokeWidth="1.500" /></svg></button>
                  <span className="h-[14px] w-3 bg-[#cdcdcd]" />
                  <span className="flex-1" />
                  <button type="button" aria-label="向下滚动" className="flex h-[14px] items-center"><svg viewBox="0 0 8 6" className="h-1.5 w-2"><path d="M1 1l3 4 3-4" fill="none" stroke="#333" strokeWidth="1.500" /></svg></button>
                </div>
              </div>
              <div className="flex h-[14px] shrink-0 items-center justify-end bg-[#f0f0f0] pr-[15px]">
                <span className="h-3 w-1 bg-[#ccc]" />
                <button type="button" aria-label="向左滚动" className="flex w-[14px] justify-center"><svg viewBox="0 0 6 8" className="h-2 w-1.5"><path d="M5 1L2 4l3 3" fill="none" stroke="#333" strokeWidth="1.500" /></svg></button>
                <span className="h-3 w-3.5 bg-[#cdcdcd]" />
                <span className="w-[250px]" />
                <button type="button" aria-label="向右滚动" className="flex w-[14px] justify-center"><svg viewBox="0 0 6 8" className="h-2 w-1.5"><path d="M1 1l3 3-3 3" fill="none" stroke="#333" strokeWidth="1.500" /></svg></button>
              </div>
            </div>
            <div className="w-5 shrink-0 pl-1">
              <div className="h-[5px] w-[15px] bg-[#444]" />
              <VBar names={editTools} height="h-[256px]" />
              <div className="my-px h-[5px] w-[15px] bg-[#4a4a4a]" />
              <VBar names={['order1', 'order2', 'order3', 'order4']} height="h-[57px]" />
              <div className="h-1 w-[15px] border-t border-[#aaa] bg-[#f3f3f3]" />
              <VBar names={['abc', 'tofront']} height="h-[28px]" />
            </div>
          </div>
          <div className="flex h-[37px] shrink-0 border-t-2 border-[#666]">
            <div className="flex w-[22px] shrink-0 flex-col items-center bg-[#666] px-[3px]">
              <span className="h-2 w-full bg-[#999]" />
              <button type="button" aria-label="关闭命令行" className="mt-1.5"><X strokeWidth={4} className="size-2.5 text-white" /></button>
              <span className="mt-1 size-1 rounded-full bg-[#ddd]" />
            </div>
            <div className="flex min-w-0 flex-1 flex-col">
              <div className="h-[18px] border-b border-[#999] bg-[#c6c6c6]" />
              <label className="flex flex-1 items-center bg-white pl-[3px]">
                <svg viewBox="0 0 12 10" className="h-2.5 w-3"><path d="M.5.5h11v9H.5z" fill="#e8ecf4" stroke="#99a" /><path d="M2 3l2 2-2 2M5 7h3" fill="none" stroke="#556" /></svg>
                <SmallDown className="mr-1 ml-0.5 text-[#888]" />
                <input aria-label="命令" defaultValue="B" className="min-w-0 flex-1 font-['DejaVu_Sans_Mono',monospace] text-[11px] leading-none outline-none" />
              </label>
            </div>
          </div>
          <Suggestions />
          <Watermark />
        </div>
      </main>
      <StatusBar />
    </div>
  );
}
